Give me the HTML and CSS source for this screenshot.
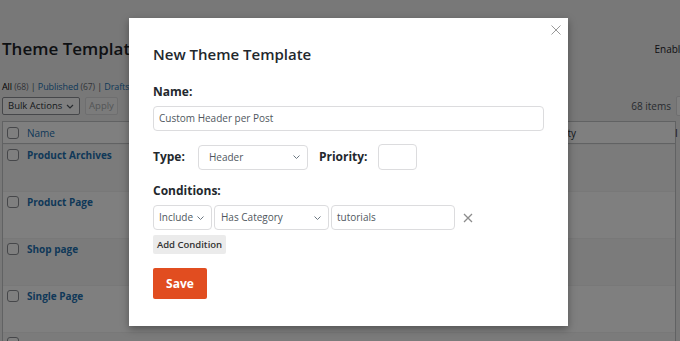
FILE: index.html
```html
<!DOCTYPE html>
<html>
<head>
<meta charset="utf-8">
<link rel="stylesheet" href="styles.css">
</head>
<body>
<div class="page">
  <div class="head">
    <h1>Theme Templates</h1>
    <span class="enable">Enable</span>
  </div>
  <div class="subsub"><span class="cur">All</span> <span class="cnt">(68)</span> | <a>Published</a> <span class="cnt">(67)</span> | <a>Drafts</a></div>
  <div class="tablenav">
    <div class="actions">
      <div class="bulk"><span>Bulk Actions</span><svg class="chev" width="8" height="5" viewBox="0 0 8 5"><polyline points="1,1 4,4 7,1" fill="none" stroke="currentColor" stroke-width="1.2"/></svg></div>
      <div class="apply">Apply</div>
    </div>
    <div class="pages">68 items <span class="pagebox"></span></div>
  </div>
  <div class="list">
    <div class="lrow hdr"><span class="cb"></span><span class="colname">Name</span><span class="colprio">ity</span><span class="collast">I</span></div>
    <div class="lrow alt"><span class="cb"></span><a class="ttl">Product Archives</a></div>
    <div class="lrow"><span class="cb"></span><a class="ttl">Product Page</a></div>
    <div class="lrow alt"><span class="cb"></span><a class="ttl">Shop page</a></div>
    <div class="lrow"><span class="cb"></span><a class="ttl">Single Page</a></div>
    <div class="lrow alt last"><span class="cb"></span></div>
  </div>
</div>
<div class="overlay"></div>
<div class="modal">
  <svg class="close" width="10" height="10" viewBox="0 0 10 10"><path d="M0.5 0.5 L9.5 9.5 M9.5 0.5 L0.5 9.5" stroke="#9a9a9a" stroke-width="1"/></svg>
  <h2>New Theme Template</h2>
  <div class="lbl">Name:</div>
  <div class="field name">Custom Header per Post</div>
  <div class="typerow">
    <span class="lbl inline">Type:</span>
    <div class="field sel type">Header<svg class="chev" width="7" height="4" viewBox="0 0 7 4"><polyline points="0.5,0.5 3.5,3.5 6.5,0.5" fill="none" stroke="currentColor" stroke-width="1"/></svg></div>
    <span class="lbl inline prio">Priority:</span>
    <div class="field priority"></div>
  </div>
  <div class="lbl cond">Conditions:</div>
  <div class="condrow">
    <div class="field sel include">Include<svg class="chev" width="7" height="4" viewBox="0 0 7 4"><polyline points="0.5,0.5 3.5,3.5 6.5,0.5" fill="none" stroke="currentColor" stroke-width="1"/></svg></div>
    <div class="field sel cat">Has Category<svg class="chev" width="7" height="4" viewBox="0 0 7 4"><polyline points="0.5,0.5 3.5,3.5 6.5,0.5" fill="none" stroke="currentColor" stroke-width="1"/></svg></div>
    <div class="field val">tutorials</div>
    <svg class="remove" width="10" height="10" viewBox="0 0 10 10"><path d="M1 1 L9 9 M9 1 L1 9" stroke="#8c8c8c" stroke-width="1.3"/></svg>
  </div>
  <div class="addcond">Add Condition</div>
  <div class="save">Save</div>
</div>
</body>
</html>
```

FILE: styles.css
```css
* { box-sizing: border-box; }
html, body { margin: 0; padding: 0; }
body {
  width: 680px;
  height: 341px;
  overflow: hidden;
  background: #f0f0f1;
  font-family: "Open Sans", "Noto Sans", sans-serif;
  color: #1d2327;
  position: relative;
}
.page { padding: 37px 0 0 2px; height: 341px; overflow: hidden; }
.head { display: flex; justify-content: space-between; align-items: center; height: 24px; }
.head h1 { margin: 0; font-size: 17px; font-weight: 600; line-height: 24px; }
.enable { font-size: 10px; color: #1d2327; margin-right: -6px; }
.subsub { margin-top: 18px; font-size: 9px; line-height: 16px; color: #50575e; white-space: nowrap; letter-spacing: -0.1px; }
.subsub .cur { color: #000; }
.subsub a { color: #2271b1; }
.subsub .cnt { color: #646970; font-size: 8.5px; }
.tablenav { margin-top: 2px; display: flex; justify-content: space-between; align-items: center; height: 18px; }
.actions { display: flex; gap: 5px; }
.bulk {
  width: 78px; height: 18px; border: 1px solid #8c8f94; border-radius: 2px; background: #fff;
  font-size: 9.5px; line-height: 16px; padding: 0 5px 0 5px; color: #2c3338; white-space: nowrap;
  display: flex; justify-content: space-between; align-items: center;
}
.bulk .chev { color: #50575e; flex: none; }
.apply {
  width: 33px; height: 18px; border: 1px solid #dcdcde; border-radius: 2px; background: #f6f7f7;
  font-size: 9.5px; line-height: 16px; color: #a7aaad; text-align: center;
}
.pages { font-size: 10px; color: #50575e; display: flex; align-items: center; gap: 5px; margin-right: -14px; }
.pagebox { width: 18px; height: 20px; border: 1px solid #dcdcde; background: #fff; border-radius: 2px; }
.list { margin-top: 6px; width: 674px; border: 1px solid #c3c4c7; background: #fff; }
.lrow { height: 47px; display: flex; align-items: flex-start; padding: 3px 0 0 4px; position: relative; border-top: 1px solid #f0f0f1; }
.lrow.hdr { height: 22px; align-items: center; padding-top: 0; border-top: none; border-bottom: 1px solid #c3c4c7; }
.lrow.alt { background: #f6f7f7; }
.cb { width: 12px; height: 12px; border: 1px solid #8c8f94; border-radius: 3px; background: #fff; flex: none; margin-top: 1px; }
.hdr .cb { margin-top: 0; }
.colname { margin-left: 8px; font-size: 10px; color: #2271b1; }
.colprio { position: absolute; left: 562px; top: 4px; font-size: 10px; color: #2c3338; }
.collast { position: absolute; left: 672px; top: 4px; font-size: 10px; color: #2c3338; }
.ttl { margin-left: 8px; font-size: 10px; font-weight: 700; color: #2271b1; line-height: 14px; }
.overlay { position: absolute; inset: 0; background: rgba(0, 0, 0, 0.5); }
.modal {
  position: absolute; left: 129px; top: 18px; width: 439px; height: 308px;
  background: #fff; box-shadow: 0 3px 8px rgba(0, 0, 0, 0.35);
  padding: 25px 24px 0 24px;
}
.close { position: absolute; right: 7px; top: 7px; }
.modal h2 { margin: 0; font-size: 15px; font-weight: 600; line-height: 22px; color: #23282d; }
.lbl { font-size: 12px; font-weight: 700; color: #23282d; line-height: 16px; }
.modal h2 + .lbl { margin-top: 19px; }
.field {
  height: 25px; border: 1px solid #dcdcde; border-radius: 4px; background: #fff;
  font-size: 10px; color: #50575e; line-height: 23px; padding-left: 5px; white-space: nowrap;
}
.field.name { margin-top: 6px; width: 391px; }
.sel { display: flex; justify-content: space-between; align-items: center; padding-right: 7px; }
.sel .chev { color: #6c7781; flex: none; }
.typerow { margin-top: 13px; display: flex; align-items: center; height: 26px; }
.lbl.inline { flex: none; }
.type { width: 110px; margin-left: 13px; padding-left: 10px; }
.prio { margin-left: 11px; }
.priority { width: 39px; height: 26px; margin-left: 10px; }
.lbl.cond { margin-top: 13px; }
.condrow { margin-top: 6px; display: flex; align-items: center; gap: 2px; }
.include { width: 59px; }
.cat { width: 115px; padding-left: 6px; }
.val { width: 124px; }
.remove { margin-left: 6px; }
.addcond {
  margin-top: 5px; width: 73px; height: 19px; background: #ebebeb; border-radius: 2px;
  font-size: 9.5px; font-weight: 600; color: #333; line-height: 19px; text-align: center;
}
.save {
  margin-top: 14px; width: 54px; height: 31px; background: #e14d20; border-radius: 2px;
  color: #fff; font-size: 12px; font-weight: 700; line-height: 31px; text-align: center;
}
```
